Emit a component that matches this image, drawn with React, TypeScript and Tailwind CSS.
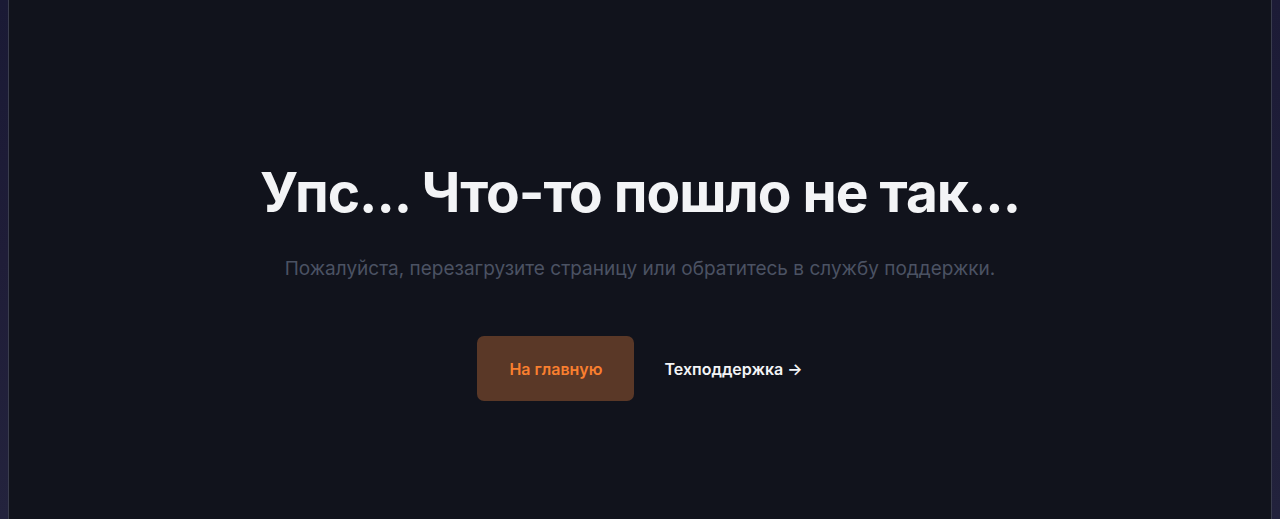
import React from 'react';

function App() {
  return (
    <div className="flex h-[519px] w-full bg-[#1b1b33] overflow-hidden" style={{ fontFamily: 'Inter, "Noto Sans", sans-serif' }}>
      <div className="w-[8px] shrink-0 bg-gradient-to-b from-[#1a1a35] via-[#1f1d38] to-[#23233d]" />

      <main className="flex-1 flex flex-col items-center border-x border-[#3a3d4d] bg-[#11131c] pt-[161px]">
        <h1 className="text-[55px] leading-[62px] font-bold tracking-[-1px] text-[#f3f4f6]">
          Упс... Что-то пошло не так...
        </h1>
        <p className="mt-[32px] text-[19px] leading-[28px] text-[#4b5263]">
          Пожалуйста, перезагрузите страницу или обратитесь в службу поддержки.
        </p>
        <div className="mt-[53px] flex items-center gap-[30px]">
          <button className="h-[65px] w-[157px] rounded-[7px] bg-[#5a3827] text-[16px] font-semibold text-[#f97f2f]">
            На главную
          </button>
          <a href="#" className="flex items-center gap-1 text-[16px] font-semibold text-[#f3f4f6]">
            Техподдержка <span aria-hidden="true">→</span>
          </a>
        </div>
      </main>

      <div className="w-[8px] shrink-0 bg-gradient-to-b from-[#1c1b36] to-[#22223c]" />
    </div>
  );
}

export default App;
